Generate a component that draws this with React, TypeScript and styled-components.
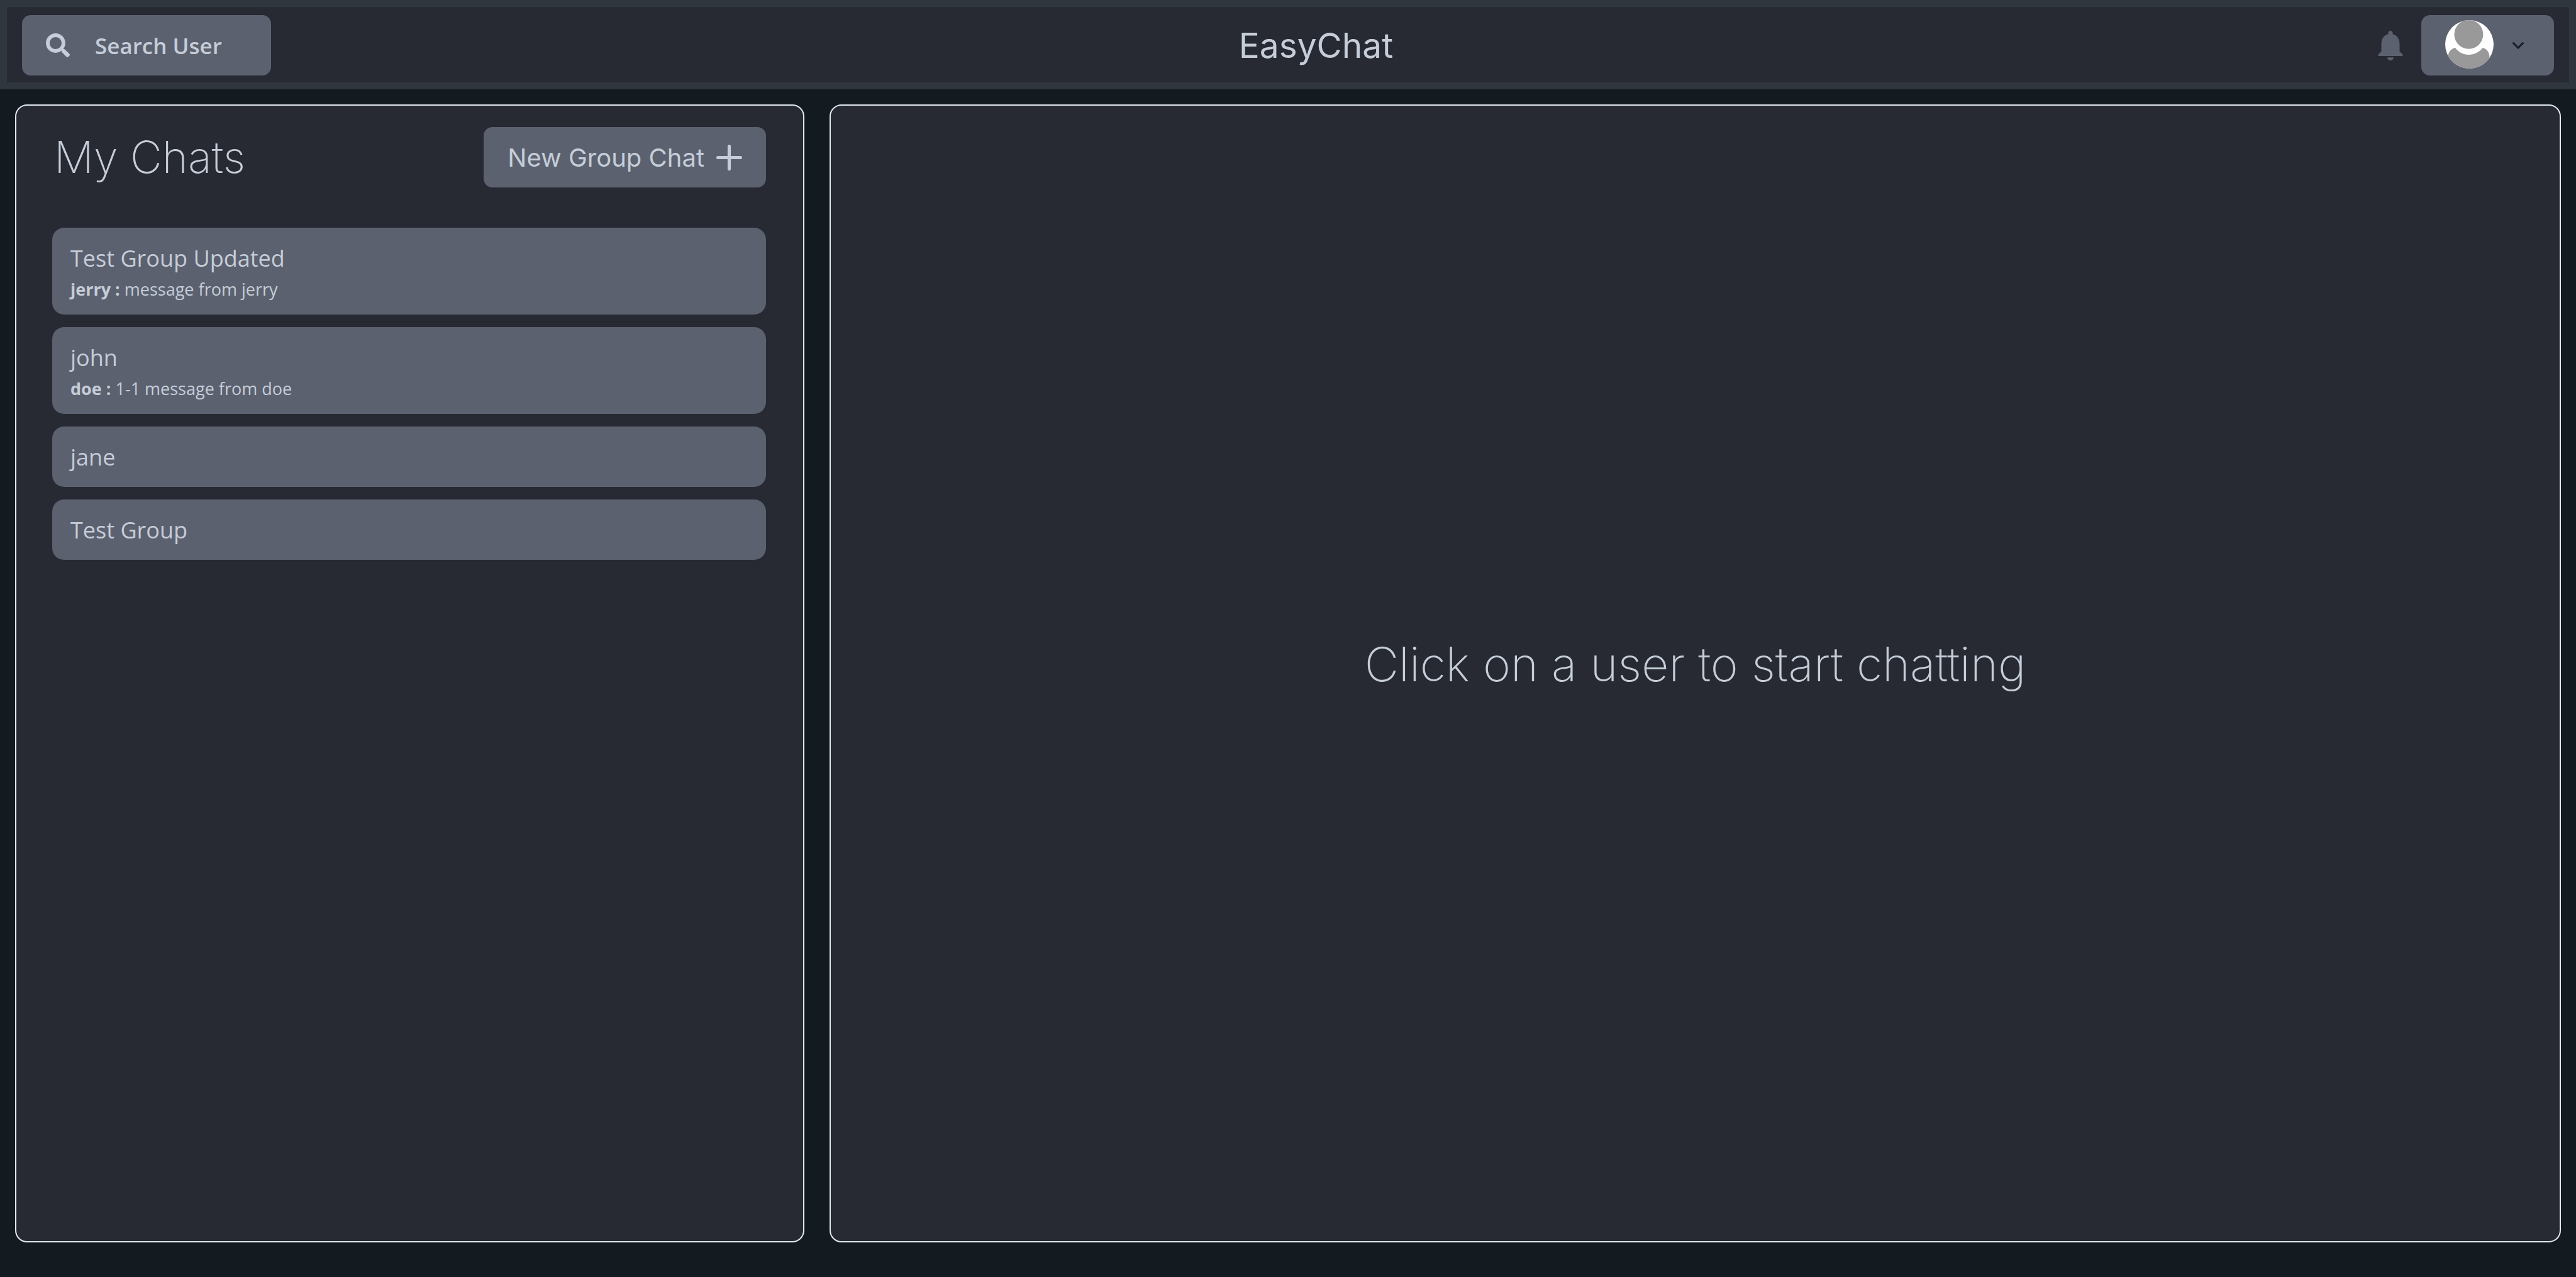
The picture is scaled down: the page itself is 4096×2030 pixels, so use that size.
import React from "react";
import styled, { createGlobalStyle } from "styled-components";
import { FaSearch } from "react-icons/fa";

const color = {
  page: "#131a20",
  frame: "#2f363e",
  surface: "#282a33",
  control: "#5c616f",
  text: "#c5cdd8",
  outline: "#e2e8f0",
  ink: "#1a202c",
};

const display = `Inter, "Liberation Sans", sans-serif`;
const body = `"Open Sans", "Noto Sans", sans-serif`;

const GlobalStyle = createGlobalStyle`
  * { box-sizing: border-box; }
  body { margin: 0; background: ${color.page}; color: ${color.text}; font-family: ${body}; }
  h1, h2, p, ul { margin: 0; padding: 0; font-weight: inherit; }
  button { border: 0; color: inherit; cursor: pointer; }
  svg { display: block; flex: none; }
`;

const Page = styled.div`
  display: flex;
  flex-direction: column;
  min-height: 100vh;
`;

const TopBar = styled.header`
  display: flex;
  align-items: center;
  justify-content: space-between;
  padding: 13px 24px 11px;
  border: 11px solid ${color.frame};
  background: ${color.surface};
`;

const Button = styled.button`
  display: flex;
  align-items: center;
  height: 96px;
  padding: 0 38px;
  border-radius: 14px;
  background: ${color.control};
`;

const SearchButton = styled(Button)`
  gap: 40px;
  padding-right: 78px;
  font: 600 35px/57px ${body};
`;

const GroupButton = styled(Button)`
  gap: 19px;
  font: 400 40px/57px ${display};
`;

const AccountButton = styled(Button)`
  gap: 20px;
  color: ${color.ink};
`;

const Brand = styled.h1`
  font: 400 55px/72px ${display};
`;

const Account = styled.div`
  display: flex;
  align-items: center;
  gap: 20px;
`;

const BellButton = styled.button`
  padding: 0 0 0 18px;
  background: none;
  color: ${color.control};
`;

const AvatarFace = styled.svg`
  margin-bottom: 4px;
  border-radius: 50%;
  background: #fff;
`;

const Columns = styled.main`
  flex: 1;
  display: grid;
  grid-template-columns: 31fr 68fr;
  gap: 40px;
  padding: 24px 24px 55px;
`;

const Panel = styled.section`
  display: flex;
  flex-direction: column;
  border: 2px solid ${color.outline};
  border-radius: 19px;
  background: ${color.surface};
`;

const ChatsPanel = styled(Panel)`
  gap: 64px;
  padding: 34px 59px 34px 57px;
`;

const WelcomePanel = styled(Panel)`
  align-items: center;
  justify-content: center;
  padding-bottom: 30px;
`;

const PanelHead = styled.div`
  display: flex;
  align-items: center;
  justify-content: space-between;
  padding-left: 3px;
`;

const Headline = styled.h2`
  font: 200 70px/96px ${display};
`;

const Welcome = styled.p`
  font: 200 75px/96px ${display};
`;

const ChatList = styled.ul`
  display: flex;
  flex-direction: column;
  gap: 20px;
  list-style: none;
`;

const ChatItem = styled.button`
  display: block;
  width: 100%;
  padding: 20px 29px 19px;
  border-radius: 19px;
  background: ${color.control};
  text-align: left;
  font-family: ${body};
`;

const ChatName = styled.span`
  display: block;
  font-size: 36px;
  line-height: 57px;
`;

const LastMessage = styled.span`
  display: block;
  font-size: 27px;
  line-height: 42px;
`;

type Chat = { name: string; sender?: string; message?: string };

const chats: Chat[] = [
  { name: "Test Group Updated", sender: "jerry", message: "message from jerry" },
  { name: "john", sender: "doe", message: "1-1 message from doe" },
  { name: "jane" },
  { name: "Test Group" },
];

const Bell = () => (
  <svg width="58" height="58" viewBox="0 0 24 24" fill="currentColor" aria-hidden="true">
    <path d="M12 22c1.1 0 2-.9 2-2h-4c0 1.1.89 2 2 2zm6-6v-5c0-3.07-1.64-5.64-4.5-6.32V4c0-.83-.67-1.5-1.5-1.5s-1.5.67-1.5 1.5v.68C7.63 5.36 6 7.92 6 11v5l-2 2v1h16v-1l-2-2z" />
  </svg>
);

const ChevronDown = () => (
  <svg width="38" height="38" viewBox="0 0 24 24" fill="currentColor" aria-hidden="true">
    <path d="M16.59 8.59L12 13.17 7.41 8.59 6 10l6 6 6-6z" />
  </svg>
);

const Plus = () => (
  <svg width="41" height="41" viewBox="0 0 24 24" fill="currentColor" aria-hidden="true">
    <path d="M0 12a1.5 1.5 0 0 0 1.5 1.5h8.75a.25.25 0 0 1 .25.25v8.75a1.5 1.5 0 0 0 3 0v-8.75a.25.25 0 0 1 .25-.25h8.75a1.5 1.5 0 0 0 0-3h-8.75a.25.25 0 0 1-.25-.25V1.5a1.5 1.5 0 0 0-3 0v8.75a.25.25 0 0 1-.25.25H1.5A1.5 1.5 0 0 0 0 12z" />
  </svg>
);

const Avatar = () => (
  <AvatarFace width="77" height="77" viewBox="0 0 77 77" fill="#999" aria-hidden="true">
    <circle cx="37.400" cy="22.700" r="23" />
    <path d="M16 44C21 50.700 28.500 54.900 37.400 54.900S54.500 50.700 59.500 44C66 45.500 70.500 51 70.500 59V77H4.900V56C5.500 50 10 45 16 44z" />
  </AvatarFace>
);

export default function App() {
  return (
    <Page>
      <GlobalStyle />
      <TopBar>
        <SearchButton type="button">
          <FaSearch size={38} aria-hidden="true" />
          Search User
        </SearchButton>
        <Brand>EasyChat</Brand>
        <Account>
          <BellButton type="button" aria-label="Notifications">
            <Bell />
          </BellButton>
          <AccountButton type="button" aria-label="Account menu">
            <Avatar />
            <ChevronDown />
          </AccountButton>
        </Account>
      </TopBar>
      <Columns>
        <ChatsPanel>
          <PanelHead>
            <Headline>My Chats</Headline>
            <GroupButton type="button">
              New Group Chat
              <Plus />
            </GroupButton>
          </PanelHead>
          <ChatList>
            {chats.map((chat) => (
              <li key={chat.name}>
                <ChatItem type="button">
                  <ChatName>{chat.name}</ChatName>
                  {chat.message && (
                    <LastMessage>
                      <b>{chat.sender} :</b> {chat.message}
                    </LastMessage>
                  )}
                </ChatItem>
              </li>
            ))}
          </ChatList>
        </ChatsPanel>
        <WelcomePanel>
          <Welcome>Click on a user to start chatting</Welcome>
        </WelcomePanel>
      </Columns>
    </Page>
  );
}
